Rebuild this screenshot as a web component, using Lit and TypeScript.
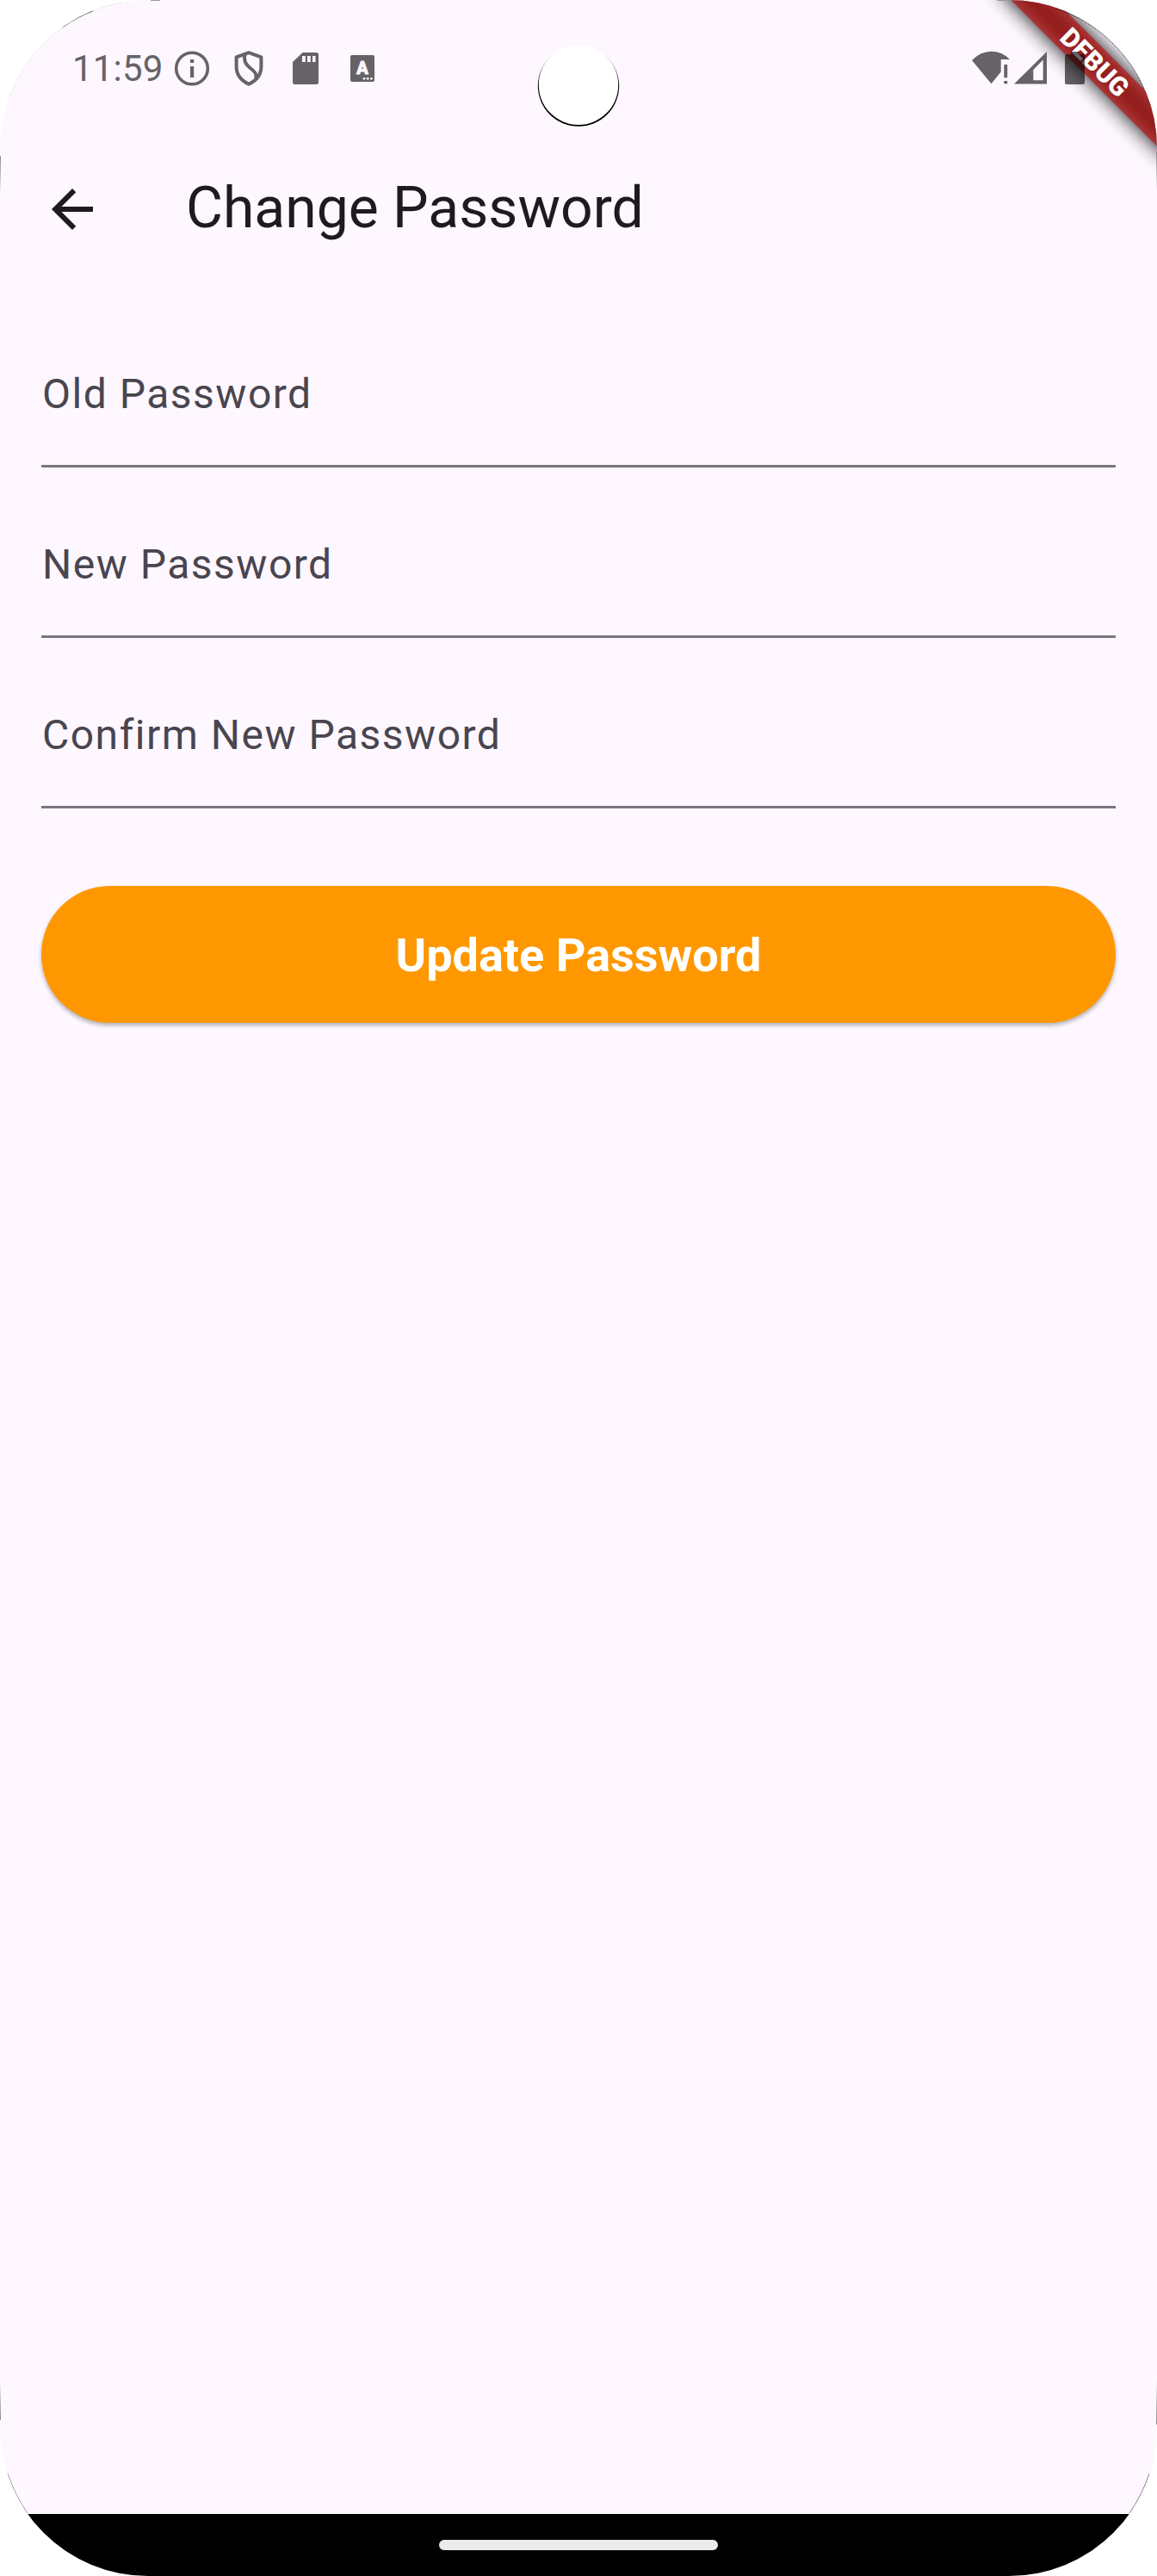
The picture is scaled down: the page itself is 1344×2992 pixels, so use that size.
import { LitElement, html, css, svg } from "lit";
import { customElement, property } from "lit/decorators.js";

@customElement("status-bar")
class StatusBar extends LitElement {
  static styles = css`
    :host { display: block; height: 159px; box-sizing: border-box; padding: 49px 80px 0 84px; }
    .row { display: flex; align-items: center; height: 60px; }
    .time { width: 106px; padding-top: 2px; font: 400 42px/60px Roboto, sans-serif; letter-spacing: 0.2px; color: #666368; white-space: nowrap; }
    .spacer { flex: 1; }
    svg { display: block; flex: none; }
    .glyph { font: 700 20px Roboto, sans-serif; }
  `;
  render() {
    const ink = "#656367";
    const paper = "#fef7ff";
    return html`<div class="row">
      <span class="time">11:59</span>
      <svg width="66" height="60" viewBox="0 0 66 60">
        <circle cx="33" cy="30.5" r="18.3" fill="none" stroke=${ink} stroke-width="3.6" />
        <path d="M31 20h4.2v4H31zM31 28h4.2v13H31z" fill=${ink} />
      </svg>
      <svg width="66" height="60" viewBox="0 0 66 60" fill="none" stroke=${ink} stroke-width="4">
        <path d="M33 12.2L18.6 17.3V28.5C18.6 37 24 44.5 33 48.8C42 44.5 47.4 37 47.4 28.5V17.3Z" stroke-linejoin="round" />
        <path d="M28.6 14C26.5 21 29 25.500 34 29.500C39.500 33.500 43 37 41.200 43" />
      </svg>
      <svg width="66" height="60" viewBox="0 0 66 60">
        <path d="M29.500 12H45.500Q48 12 48 14.500V46.500Q48 49 45.500 49H20.500Q18 49 18 46.500V23Z" fill=${ink} />
        <path d="M29 16h3.800v7H29zM35 16h3.800v7H35zM41 16h3.500v7H41z" fill=${paper} />
      </svg>
      <svg width="66" height="60" viewBox="0 0 66 60">
        <rect x="19" y="15" width="28" height="31" rx="2" fill=${ink} />
        <text class="glyph" x="33" y="37" text-anchor="middle" fill=${paper} stroke=${paper} stroke-width="1.2" stroke-linejoin="round">A</text>
        <g fill=${paper}><circle cx="35" cy="42.300" r="1.400" /><circle cx="39.200" cy="42.300" r="1.400" /><circle cx="43.400" cy="42.300" r="1.400" /></g>
      </svg>
      <span class="spacer"></span>
      <svg width="140" height="60" viewBox="0 0 140 60">
        <g fill=${ink}>
          <path d="M5 21Q15 10.800 27.500 10.800Q40 10.800 49 20H38.700V34.500L27.500 48.300Z" />
          <path d="M42.300 26h3.900v15.300h-3.900zM42.300 45h3.900v3.300h-3.900z" />
          <path fill-rule="evenodd" d="M54 48.500L92 11V48.500ZM76.300 32V44.300H87.700V20.500Z" />
        </g>
        <path d="M120 11h9v3h5q2 0 2 2V47q0 2-2 2H115q-2 0-2-2V16q0-2 2-2h5z" fill="#000" fill-opacity=".6" />
      </svg>
    </div>`;
  }
}

@customElement("text-field")
class TextField extends LitElement {
  @property() label = "";
  static styles = css`
    :host { display: flex; align-items: center; box-sizing: border-box; height: 168px; border-bottom: 3px solid #7a757f; }
    .label { padding-left: 1px; font: 400 48px/72px Roboto, sans-serif; letter-spacing: 1.5px; color: #49454f; white-space: nowrap; }
  `;
  render() {
    return html`<span class="label">${this.label}</span>`;
  }
}

@customElement("app-root")
class AppRoot extends LitElement {
  static styles = css`
    :host { display: block; background: #fff; }
    .screen { position: relative; display: flex; flex-direction: column; width: 1344px; height: 2992px; overflow: hidden; border-radius: 172px; background: #fef7ff; }
    .status { position: relative; z-index: 2; }
    .appbar { display: flex; align-items: center; height: 168px; padding-left: 48px; gap: 96px; }
    .back { display: block; width: 72px; height: 72px; }
    .title { padding-bottom: 2px; font: 400 66px/84px Roboto, sans-serif; color: #1d1b20; white-space: nowrap; }
    .form { flex: 1; display: flex; flex-direction: column; gap: 30px; padding: 48px; }
    .button { display: flex; align-items: center; justify-content: center; box-sizing: border-box; height: 159px; margin-top: 60px; padding: 2px 0 0; border: 0; border-radius: 80px; background: #ff9800; box-shadow: 0 3px 5px rgba(0, 0, 0, 0.3); color: #fff; font: 700 54px/60px Roboto, sans-serif; }
    .nav { display: flex; align-items: center; justify-content: center; height: 72px; background: #000; }
    .pill { width: 324px; height: 12px; border-radius: 6px; background: #ebebeb; }
    .overlay { position: absolute; left: 0; top: 0; pointer-events: none; }
    .frame { z-index: 3; }
    .debug { font: 900 30.6px Roboto, sans-serif; }
  `;

  // Corner banner: a strip rotated about the top right corner, with a soft shadow under it.
  private banner() {
    return svg`
      <defs><filter id="soft" x="-30%" y="-150%" width="160%" height="400%"><feGaussianBlur stdDeviation="11.9" /></filter></defs>
      <g transform="translate(1344 0) rotate(45)">
        <rect x="-140" y="84" width="280" height="36" fill="#000" fill-opacity=".95" filter="url(#soft)" />
        <rect x="-120" y="84" width="240" height="36" fill="#b71c1c" fill-opacity=".76" />
        <text class="debug" x="0" y="113" text-anchor="middle" fill="#fff">DEBUG</text>
      </g>`;
  }

  // Camera cut-out and the fine dark traces along the display edge.
  private frame() {
    return svg`
      <defs>
        <linearGradient id="down" x1="0" y1="0" x2="0" y2="1"><stop offset="0" stop-color="#8c888c" /><stop offset="1" stop-color="#fef7ff" /></linearGradient>
        <linearGradient id="up" x1="0" y1="1" x2="0" y2="0"><stop offset="0" stop-color="#8c888c" /><stop offset="1" stop-color="#fef7ff" /></linearGradient>
        <linearGradient id="rim" x1="0" y1="0" x2="0" y2="1"><stop offset=".1" stop-color="#000" stop-opacity="0" /><stop offset=".5" stop-color="#000" /></linearGradient>
      </defs>
      <circle cx="672" cy="99.600" r="47.200" fill="url(#rim)" />
      <circle cx="672" cy="98.700" r="46.200" fill="#fff" />
      <rect x="0" y="181" width="1" height="46" fill="url(#down)" />
      <rect x="1343" y="176" width="1" height="46" fill="url(#down)" />
      <rect x="0" y="2765" width="1" height="46" fill="url(#up)" />
      <rect x="1343" y="2765" width="1" height="51" fill="url(#up)" />
      <rect x="175" y="0" width="11" height="1" fill="#9c989c" />
      <rect x="1158" y="0" width="12" height="1" fill="#9c989c" />
      <g fill="none" stroke="#000">
        <path d="M11 112A172 172 0 0 1 142 3" stroke-opacity=".35" stroke-width=".6" stroke-dasharray="1.500 2" />
        <path d="M72 32A172 172 0 0 1 108 12.500" stroke-opacity=".8" stroke-width="1" />
        <path d="M1226 9.500A172 172 0 0 1 1329 103" stroke-opacity=".7" stroke-width="1" stroke-dasharray="2 1" />
        <path d="M32 2919A172 172 0 0 1 9 2873" stroke-opacity=".5" stroke-width=".8" />
        <path d="M1312 2919A172 172 0 0 0 1335 2873" stroke-opacity=".6" stroke-width=".9" />
      </g>`;
  }

  render() {
    return html`<div class="screen">
      <status-bar class="status"></status-bar>
      <div class="appbar">
        <svg class="back" viewBox="0 0 24 24" fill="#1d1b20"><path d="M20 11H7.830l5.590-5.590L12 4l-8 8 8 8 1.410-1.410L7.830 13H20z" /></svg>
        <span class="title">Change Password</span>
      </div>
      <div class="form">
        <text-field label="Old Password"></text-field>
        <text-field label="New Password"></text-field>
        <text-field label="Confirm New Password"></text-field>
        <button class="button">Update Password</button>
      </div>
      <div class="nav"><div class="pill"></div></div>
      <svg class="overlay" width="1344" height="300" viewBox="0 0 1344 300">${this.banner()}</svg>
      <svg class="overlay frame" width="1344" height="2992" viewBox="0 0 1344 2992">${this.frame()}</svg>
    </div>`;
  }
}
